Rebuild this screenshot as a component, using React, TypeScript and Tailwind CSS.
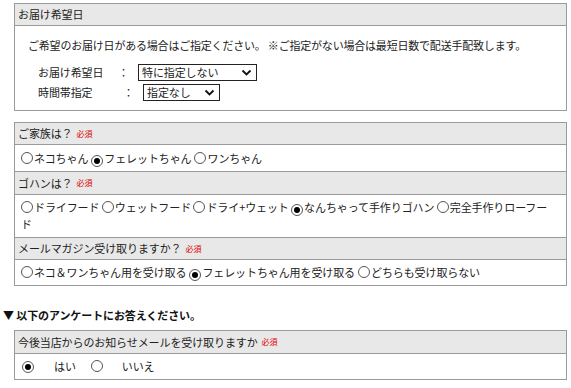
import React from "react";

const Radio = ({ on }: { on?: boolean }) => (
  <span className="inline-flex w-[12px] h-[12px] rounded-full border border-[#555] bg-white items-center justify-center align-[-1px] mr-[1px]">
    {on && <span className="w-[6px] h-[6px] rounded-full bg-black" />}
  </span>
);

const Req = () => <span className="ml-[4px] text-[8px] text-[#e00000] align-[1px]">必須</span>;

const Chevron = () => (
  <svg width="11" height="8" viewBox="0 0 11 8" className="shrink-0">
    <polyline points="1.5,1.5 5.5,5.5 9.5,1.5" fill="none" stroke="#111" strokeWidth="1.8" />
  </svg>
);

const Select = ({ text, w }: { text: string; w: string }) => (
  <div className={`${w} h-[17px] border border-[#222] bg-white flex items-center justify-between pl-[3px] pr-[4px] leading-[15px]`}>
    <span>{text}</span>
    <Chevron />
  </div>
);

const Head = ({ children, h }: { children: React.ReactNode; h: string }) => (
  <div className={`${h} bg-[#e8e8e8] border-b border-[#9a9a9a] flex items-center pl-[3px]`}>{children}</div>
);

export default function App() {
  return (
    <div
      className="w-[571px] h-[388px] bg-white text-[#222] text-[11px] tracking-[-0.1px] overflow-hidden pt-[3px]"
      style={{ fontFamily: '"Noto Sans CJK JP", "Noto Sans", sans-serif' }}
    >
      {/* Box 1 */}
      <div className="ml-[14px] w-[553px] border border-[#9a9a9a]">
        <Head h="h-[22px]">お届け希望日</Head>
        <div className="pl-[13px] pt-[11px] pb-[9px]">
          <div className="h-[17px] leading-[17px] tracking-[-0.2px]">
            ご希望のお届け日がある場合はご指定ください。 ※ご指定がない場合は最短日数で配送手配致します。
          </div>
          <div className="mt-[10px] flex items-center h-[17px]">
            <span className="ml-[10px] w-[80px]">お届け希望日</span>
            <span className="w-[20px]">：</span>
            <Select text="特に指定しない" w="w-[119px]" />
          </div>
          <div className="mt-[3px] flex items-center h-[17px]">
            <span className="ml-[10px] w-[85px]">時間帯指定</span>
            <span className="w-[20px]">：</span>
            <Select text="指定なし" w="w-[77px]" />
          </div>
        </div>
      </div>

      {/* Box 2 */}
      <div className="mt-[11px] ml-[14px] w-[553px] border border-[#9a9a9a]">
        <Head h="h-[22px]">
          ご家族は？<Req />
        </Head>
        <div className="h-[27px] border-b border-[#9a9a9a] flex items-center pl-[6px]">
          <span><Radio />ネコちゃん </span>
          <span className="ml-[3px]"><Radio on />フェレットちゃん</span>
          <span className="ml-[3px]"><Radio />ワンちゃん</span>
        </div>
        <Head h="h-[23px]">
          ゴハンは？<Req />
        </Head>
        <div className="h-[43px] border-b border-[#9a9a9a] pl-[6px] pr-[12px] pt-[4px] leading-[17px]">
          <Radio />ドライフード <Radio />ウェットフード <Radio />ドライ+ウェット <Radio on />なんちゃって手作りゴハン <Radio />完全手作りローフード
        </div>
        <Head h="h-[22px]">
          メールマガジン受け取りますか？<Req />
        </Head>
        <div className="h-[25px] flex items-center pl-[6px]">
          <span><Radio />ネコ＆ワンちゃん用を受け取る</span>
          <span className="ml-[3px]"><Radio on />フェレットちゃん用を受け取る</span>
          <span className="ml-[3px]"><Radio />どちらも受け取らない</span>
        </div>
      </div>

      <div className="mt-[21px] ml-[3px] h-[17px] leading-[17px] font-bold text-[#111]">▼ 以下のアンケートにお答えください。</div>

      {/* Box 3 */}
      <div className="mt-[6px] ml-[14px] w-[553px] border border-[#9a9a9a]">
        <Head h="h-[23px]">
          今後当店からのお知らせメールを受け取りますか<Req />
        </Head>
        <div className="h-[25px] flex items-center pl-[7px]">
          <Radio on />
          <span className="ml-[19px]">はい</span>
          <span className="ml-[15px]"><Radio /></span>
          <span className="ml-[18px]">いいえ</span>
        </div>
      </div>
    </div>
  );
}
